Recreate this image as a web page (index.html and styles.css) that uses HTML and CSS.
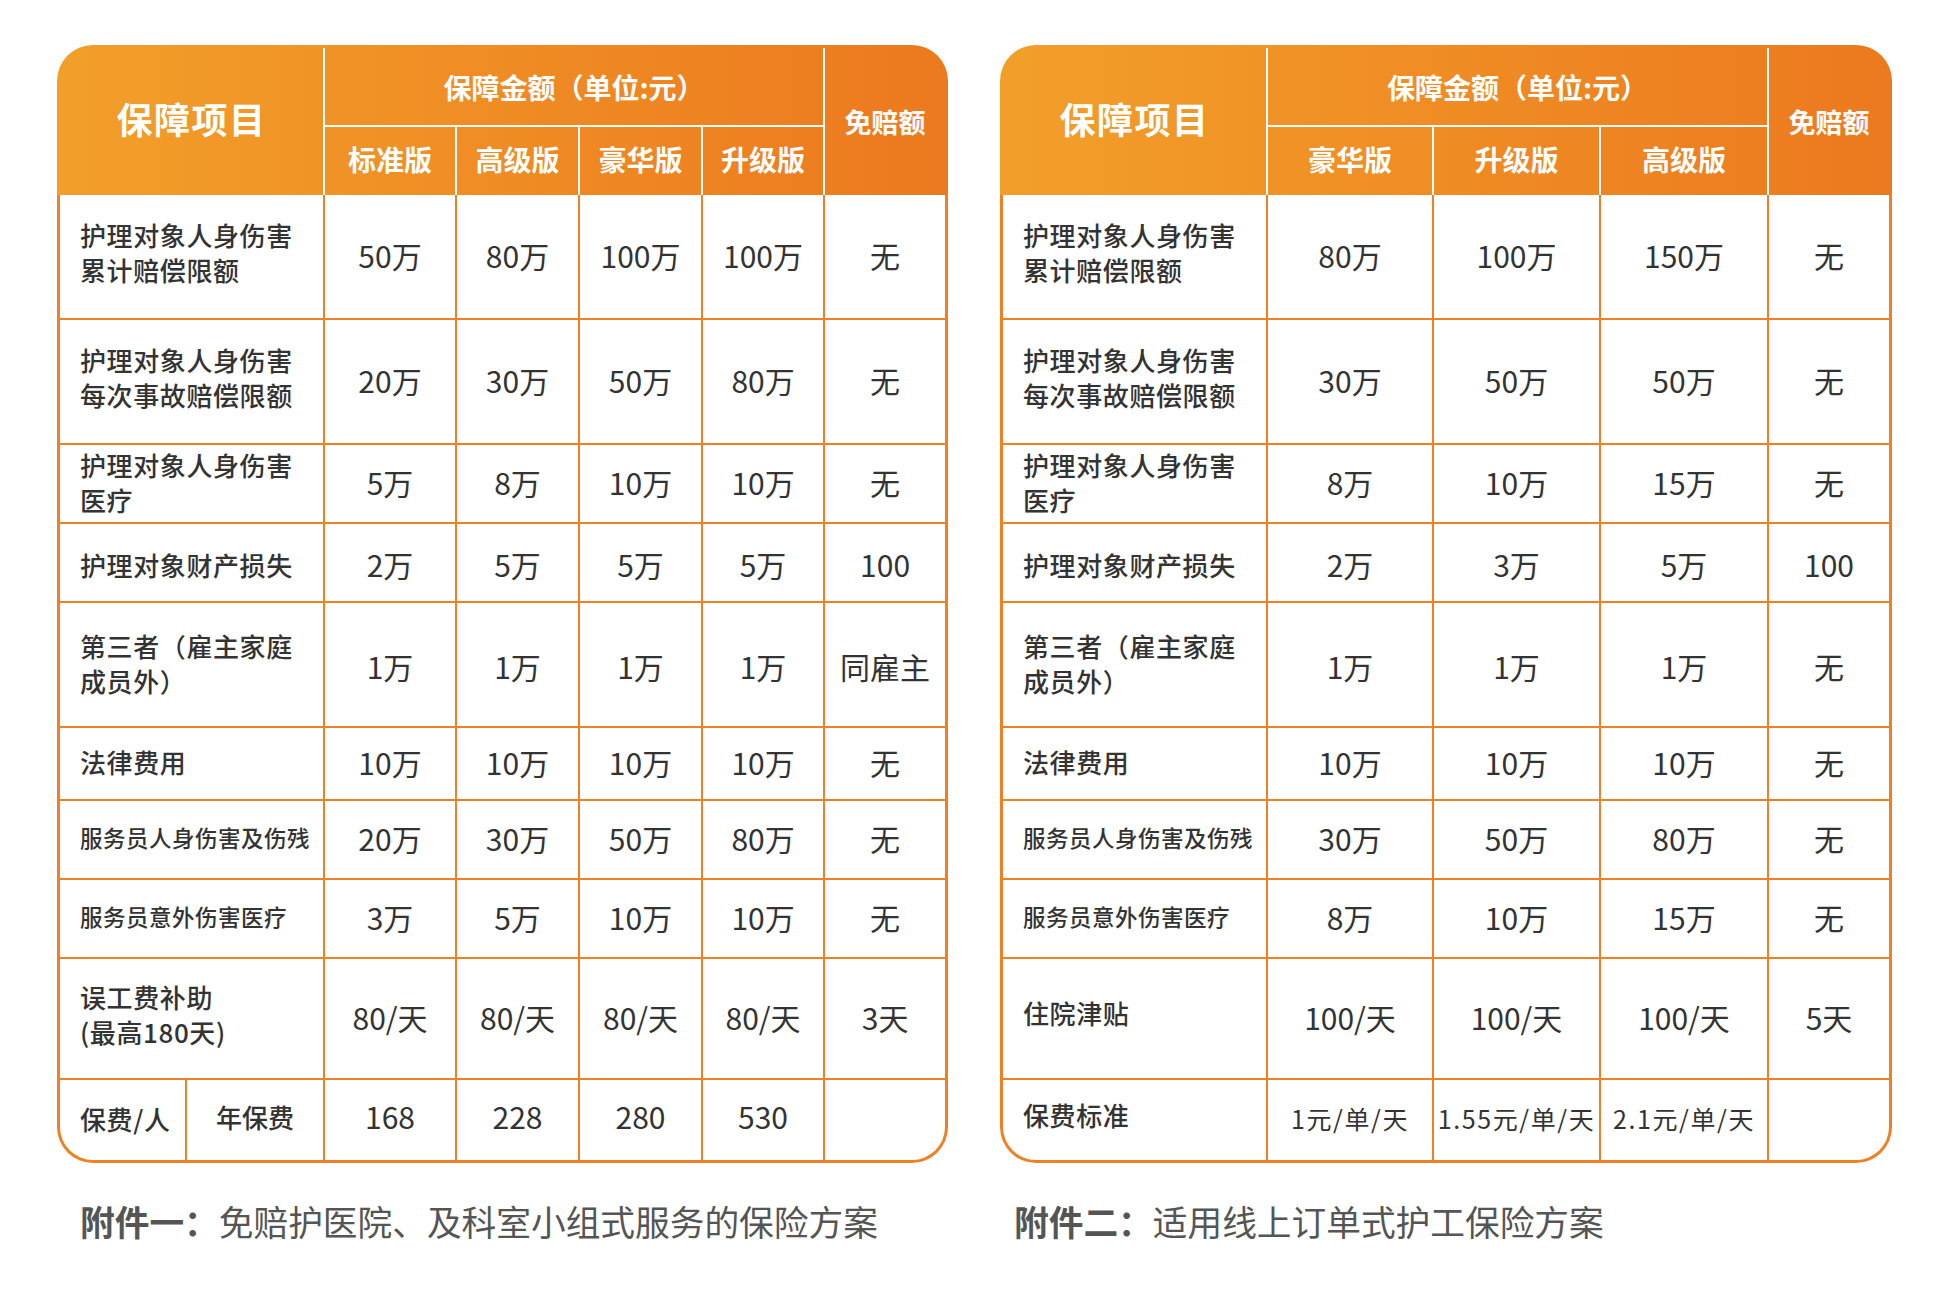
FILE: index.html
```html
<!DOCTYPE html>
<html lang="zh-CN">
<head>
<meta charset="utf-8">
<title>护工保险方案</title>
<link rel="stylesheet" href="styles.css">
</head>
<body>
<div class="page">
  <section class="plan plan-one">
    <div class="sheet">
      <table class="grid">
        <colgroup>
          <col class="c-lab-a"><col class="c-lab-b"><col class="c-a1"><col class="c-a2"><col class="c-a3"><col class="c-a4"><col class="c-ded">
        </colgroup>
        <thead>
          <tr class="h-row1">
            <th class="h-item" rowspan="2" colspan="2">保障项目</th>
            <th class="h-group" colspan="4">保障金额（单位:元）</th>
            <th class="h-ded" rowspan="2">免赔额</th>
          </tr>
          <tr class="h-row2">
            <th class="h-ver">标准版</th><th class="h-ver">高级版</th><th class="h-ver">豪华版</th><th class="h-ver">升级版</th>
          </tr>
        </thead>
        <tbody>
          <tr class="row-lg"><td class="lab" colspan="2">护理对象人身伤害<br>累计赔偿限额</td><td>50万</td><td>80万</td><td>100万</td><td>100万</td><td>无</td></tr>
          <tr class="row-lg"><td class="lab" colspan="2">护理对象人身伤害<br>每次事故赔偿限额</td><td>20万</td><td>30万</td><td>50万</td><td>80万</td><td>无</td></tr>
          <tr class="row-sm"><td class="lab" colspan="2">护理对象人身伤害<br>医疗</td><td>5万</td><td>8万</td><td>10万</td><td>10万</td><td>无</td></tr>
          <tr class="row-sm"><td class="lab lab-low" colspan="2">护理对象财产损失</td><td class="num-low">2万</td><td class="num-low">5万</td><td class="num-low">5万</td><td class="num-low">5万</td><td class="num-low">100</td></tr>
          <tr class="row-lg"><td class="lab lab-mid" colspan="2">第三者（雇主家庭<br>成员外）</td><td class="num-low">1万</td><td class="num-low">1万</td><td class="num-low">1万</td><td class="num-low">1万</td><td class="num-low">同雇主</td></tr>
          <tr class="row-xs"><td class="lab" colspan="2">法律费用</td><td>10万</td><td>10万</td><td>10万</td><td>10万</td><td>无</td></tr>
          <tr class="row-sm"><td class="lab lab-small" colspan="2">服务员人身伤害及伤残</td><td>20万</td><td>30万</td><td>50万</td><td>80万</td><td>无</td></tr>
          <tr class="row-sm"><td class="lab lab-small" colspan="2">服务员意外伤害医疗</td><td>3万</td><td>5万</td><td>10万</td><td>10万</td><td>无</td></tr>
          <tr class="row-md"><td class="lab" colspan="2">误工费补助<br>(最高180天)</td><td>80/天</td><td>80/天</td><td>80/天</td><td>80/天</td><td>3天</td></tr>
          <tr class="row-ft"><td class="lab">保费/人</td><td class="lab-center">年保费</td><td class="num-high">168</td><td class="num-high">228</td><td class="num-high">280</td><td class="num-high">530</td><td></td></tr>
        </tbody>
      </table>
    </div>
    <p class="caption caption-one"><strong>附件一：</strong>免赔护医院、及科室小组式服务的保险方案</p>
  </section>

  <section class="plan plan-two">
    <div class="sheet">
      <table class="grid">
        <colgroup>
          <col class="c-lab"><col class="c-b1"><col class="c-b2"><col class="c-b3"><col class="c-ded">
        </colgroup>
        <thead>
          <tr class="h-row1">
            <th class="h-item" rowspan="2">保障项目</th>
            <th class="h-group" colspan="3">保障金额（单位:元）</th>
            <th class="h-ded" rowspan="2">免赔额</th>
          </tr>
          <tr class="h-row2">
            <th class="h-ver">豪华版</th><th class="h-ver">升级版</th><th class="h-ver">高级版</th>
          </tr>
        </thead>
        <tbody>
          <tr class="row-lg"><td class="lab">护理对象人身伤害<br>累计赔偿限额</td><td>80万</td><td>100万</td><td>150万</td><td>无</td></tr>
          <tr class="row-lg"><td class="lab">护理对象人身伤害<br>每次事故赔偿限额</td><td>30万</td><td>50万</td><td>50万</td><td>无</td></tr>
          <tr class="row-sm"><td class="lab">护理对象人身伤害<br>医疗</td><td>8万</td><td>10万</td><td>15万</td><td>无</td></tr>
          <tr class="row-sm"><td class="lab lab-low">护理对象财产损失</td><td class="num-low">2万</td><td class="num-low">3万</td><td class="num-low">5万</td><td class="num-low">100</td></tr>
          <tr class="row-lg"><td class="lab lab-mid">第三者（雇主家庭<br>成员外）</td><td class="num-low">1万</td><td class="num-low">1万</td><td class="num-low">1万</td><td class="num-low">无</td></tr>
          <tr class="row-xs"><td class="lab">法律费用</td><td>10万</td><td>10万</td><td>10万</td><td>无</td></tr>
          <tr class="row-sm"><td class="lab lab-small">服务员人身伤害及伤残</td><td>30万</td><td>50万</td><td>80万</td><td>无</td></tr>
          <tr class="row-sm"><td class="lab lab-small">服务员意外伤害医疗</td><td>8万</td><td>10万</td><td>15万</td><td>无</td></tr>
          <tr class="row-md"><td class="lab lab-raise">住院津贴</td><td>100/天</td><td>100/天</td><td>100/天</td><td>5天</td></tr>
          <tr class="row-ft"><td class="lab lab-raise">保费标准</td><td class="fee">1元/单/天</td><td class="fee">1.55元/单/天</td><td class="fee">2.1元/单/天</td><td></td></tr>
        </tbody>
      </table>
    </div>
    <p class="caption caption-two"><strong>附件二：</strong>适用线上订单式护工保险方案</p>
  </section>
</div>
</body>
</html>
```

FILE: styles.css
```css
html, body {
  margin: 0;
  padding: 0;
  background: #ffffff;
}

body {
  font-family: "Noto Sans CJK SC", "Noto Sans", sans-serif;
  color: #333333;
}

.page {
  display: flex;
  align-items: flex-start;
  gap: 52px;
  padding: 45px 0 0 57px;
}

.plan {
  display: flex;
  flex-direction: column;
}

.plan-one { width: 891px; }
.plan-two { width: 892px; }

.sheet {
  border: 3px solid transparent;
  border-radius: 36px;
  overflow: hidden;
  background:
    linear-gradient(90deg, #f29f2a 0%, #ef8a23 55%, #ec791f 100%) 0 0 / 100% 150px no-repeat border-box,
    #ef8024;
}

.grid {
  width: 100%;
  table-layout: fixed;
  border-collapse: separate;
  border-spacing: 0;
}

/* column widths */
.c-lab-a { width: 127px; }
.c-lab-b { width: 138px; }
.c-a1 { width: 132px; }
.c-a2 { width: 123px; }
.c-a3 { width: 123px; }
.c-a4 { width: 122px; }
.c-ded { width: 120px; }

.c-lab { width: 265px; }
.c-b1 { width: 166px; }
.c-b2 { width: 167px; }
.c-b3 { width: 168px; }

/* header */
.grid th {
  padding: 0;
  color: #ffffff;
  font-weight: 700;
  text-align: center;
  vertical-align: middle;
  line-height: 1;
  border-right: 2px solid #ffffff;
}

.grid th.h-ded { border-right: 0; }

.h-row1 { height: 79px; }
.h-row2 { height: 68px; }

.grid th.h-item {
  font-size: 36px;
  letter-spacing: 1.5px;
  padding-bottom: 8px;
}

.grid th.h-group {
  font-size: 28px;
  border-bottom: 2px solid #ffffff;
}

.grid th.h-ver {
  font-size: 28px;
  padding-bottom: 5px;
}

.grid th.h-ded { font-size: 27px; }

/* body */
.grid td {
  padding: 0 0 4px;
  background: #ffffff;
  border-right: 2px solid #ef8024;
  border-bottom: 2px solid #ef8024;
  text-align: center;
  vertical-align: middle;
  font-size: 30px;
  line-height: 1;
  color: #333333;
}

.grid td:last-child { border-right: 0; }
.grid tbody tr:last-child td { border-bottom: 0; }

.grid td.num-low { padding: 2px 0 0; }
.grid td.num-high { padding: 0 0 9px; }

.row-lg { height: 125px; }
.row-md { height: 121px; }
.row-sm { height: 79px; }
.row-xs { height: 73px; }
.row-ft { height: 80px; }

.grid td.lab {
  text-align: left;
  padding: 0 0 4px 20px;
  font-size: 26px;
  font-weight: 500;
  line-height: 35px;
  letter-spacing: 0.6px;
}

.grid .row-lg td.lab,
.grid .row-md td.lab { padding-bottom: 10px; }

.grid .row-lg td.lab-mid { padding-bottom: 4px; }

.grid td.lab-low { padding: 4px 0 0 20px; }

.grid td.lab-small {
  font-size: 22.5px;
  letter-spacing: 0.5px;
}

.grid .row-md td.lab-raise,
.grid td.lab-raise { padding-bottom: 12px; }

.grid td.lab-center {
  font-size: 26px;
  font-weight: 500;
  padding-bottom: 6px;
}

.grid td.fee {
  font-size: 25px;
  letter-spacing: 1.6px;
  padding-bottom: 4px;
}

/* captions */
.caption {
  margin: 38px 0 0;
  font-size: 34.7px;
  line-height: 40px;
  color: #555555;
  white-space: nowrap;
}

.caption strong {
  font-weight: 700;
}

.caption-one { padding-left: 23px; }
.caption-two { padding-left: 14px; }
```
